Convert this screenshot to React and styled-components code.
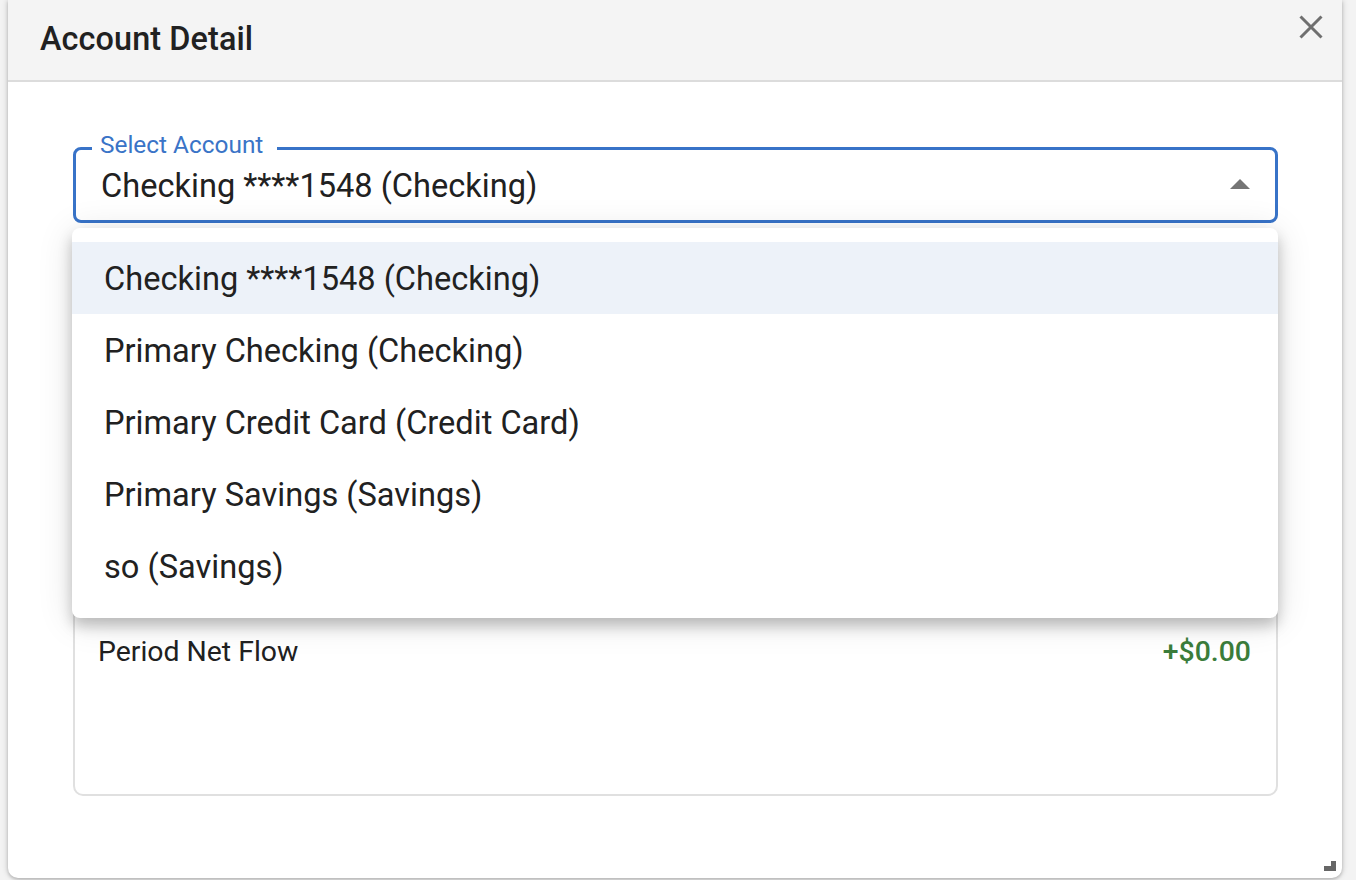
import React from "react";
import styled, { createGlobalStyle } from "styled-components";

const GlobalStyle = createGlobalStyle`
  html, body {
    margin: 0;
    padding: 0;
    background: #f3f3f3;
    font-family: Roboto, "Liberation Sans", sans-serif;
    color: #212121;
  }
  * { box-sizing: border-box; }
`;

const Page = styled.div`
  width: 1356px;
  height: 880px;
  padding: 0 14px 2px 8px;
  display: flex;
`;

const Dialog = styled.div`
  position: relative;
  flex: 1;
  display: flex;
  flex-direction: column;
  background: #fff;
  border-radius: 0 0 10px 10px;
  box-shadow: 0 0 6px rgba(0, 0, 0, 0.22), 0 2px 3px rgba(0, 0, 0, 0.15);
`;

const Header = styled.div`
  height: 82px;
  display: flex;
  justify-content: space-between;
  align-items: center;
  padding: 0 18px 2px 32px;
  background: #f4f4f4;
  border-bottom: 2px solid #dcdcdc;
`;

const Title = styled.h2`
  margin: 0;
  font-size: 32.4px;
  font-weight: 500;
  color: #212121;
  letter-spacing: 0.1px;
`;

const CloseButton = styled.button`
  align-self: flex-start;
  margin-top: 14px;
  width: 26px;
  height: 26px;
  padding: 0;
  border: none;
  background: transparent;
  display: flex;
  align-items: center;
  justify-content: center;
  cursor: pointer;
`;

const Body = styled.div`
  flex: 1;
  padding: 65px 64px 0 65px;
  display: flex;
  flex-direction: column;
`;

const SelectWrap = styled.div`
  position: relative;
`;

const SelectBox = styled.div`
  height: 76px;
  border: 3px solid #3873c8;
  border-radius: 8px;
  display: flex;
  align-items: center;
  justify-content: space-between;
  padding: 2px 25px 0 25px;
  font-size: 32.6px;
  color: #212121;
`;

const FloatLabel = styled.span`
  position: absolute;
  top: -17px;
  left: 19px;
  padding: 0 14px 0 8px;
  background: #fff;
  font-size: 24.4px;
  line-height: 30px;
  color: #3a74c7;
`;

const Caret = styled.span`
  width: 0;
  height: 0;
  border-left: 10px solid transparent;
  border-right: 10px solid transparent;
  border-bottom: 10px solid #757575;
  margin-top: -4px;
`;

const Menu = styled.ul`
  position: absolute;
  top: 81px;
  left: -1px;
  right: 0;
  margin: 0;
  padding: 14px 0 16px;
  list-style: none;
  background: #fff;
  border-radius: 8px;
  box-shadow: 0 8px 14px rgba(0, 0, 0, 0.22), 0 4px 36px rgba(0, 0, 0, 0.12);
  z-index: 10;
`;

const MenuItem = styled.li`
  height: 72px;
  display: flex;
  align-items: center;
  padding: 2px 0 0 32px;
  font-size: 32.6px;
  color: #212121;
  background: ${(p) => (p.$selected ? "#edf2f9" : "transparent")};
  cursor: pointer;
`;

const Card = styled.div`
  margin-top: 32px;
  height: 541px;
  border: 2px solid #e0e0e0;
  border-radius: 10px;
  padding: 376px 25px 0 23px;
`;

const Row = styled.div`
  height: 36px;
  display: flex;
  align-items: center;
  justify-content: space-between;
  font-size: 28.4px;
`;

const Amount = styled.span`
  color: #3b7d3b;
  font-weight: 500;
`;

const Grip = styled.svg`
  position: absolute;
  right: 6px;
  bottom: 7px;
`;

const accounts = [
  "Checking ****1548 (Checking)",
  "Primary Checking (Checking)",
  "Primary Credit Card (Credit Card)",
  "Primary Savings (Savings)",
  "so (Savings)",
];

export default function App() {
  return (
    <>
      <GlobalStyle />
      <Page>
        <Dialog>
          <Header>
            <Title>Account Detail</Title>
            <CloseButton aria-label="Close">
              <svg width="24" height="24" viewBox="0 0 24 24">
                <path
                  d="M1.5 1.5 L22.5 22.5 M22.5 1.5 L1.5 22.5"
                  stroke="#6f6f6f"
                  strokeWidth="3"
                  fill="none"
                />
              </svg>
            </CloseButton>
          </Header>
          <Body>
            <SelectWrap>
              <FloatLabel>Select Account</FloatLabel>
              <SelectBox>
                <span>{accounts[0]}</span>
                <Caret />
              </SelectBox>
              <Menu>
                {accounts.map((a, i) => (
                  <MenuItem key={a} $selected={i === 0}>
                    {a}
                  </MenuItem>
                ))}
              </Menu>
            </SelectWrap>
            <Card>
              <Row>
                <span>Period Net Flow</span>
                <Amount>+$0.00</Amount>
              </Row>
            </Card>
          </Body>
          <Grip width="12" height="10" viewBox="0 0 12 10">
            <path d="M7 0 H12 V10 H0 V5 H7 Z" fill="#666" />
          </Grip>
        </Dialog>
      </Page>
    </>
  );
}
